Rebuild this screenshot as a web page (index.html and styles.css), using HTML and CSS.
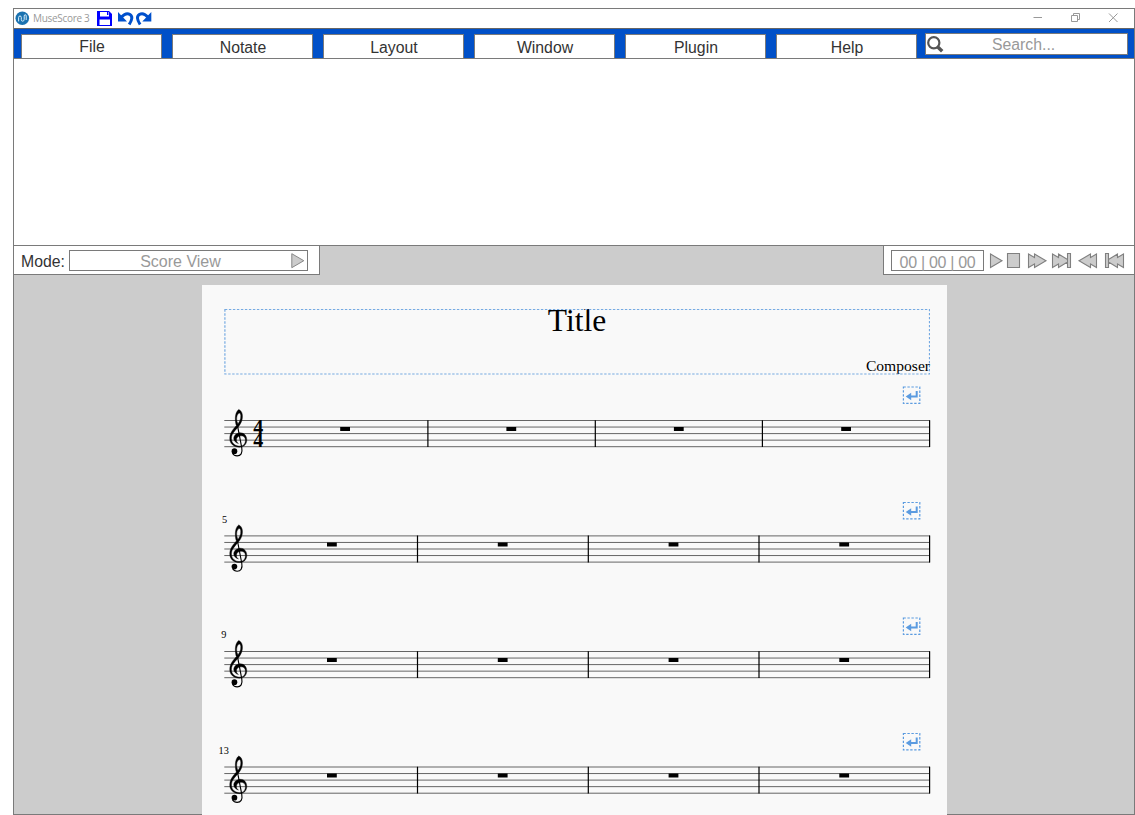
FILE: index.html
```html
<!DOCTYPE html>
<html lang="en">
<head>
<meta charset="utf-8">
<title>MuseScore 3</title>
<link rel="stylesheet" href="styles.css">
</head>
<body>
<svg class="defs" width="0" height="0" aria-hidden="true">
  <defs>
    <symbol id="clef" viewBox="0 -36 80 150" overflow="visible">
      <path class="clef-body" d="M41 -33C49 -30 53 -20 52 -10C51 8 39 20 30 30C22 39 19 46 19 54C19 68 30 77 44 77C56 77 61 68 61 59C61 50 55 46 48 46C39 46 34 52 34 58C34 64 36 67 40 69C32 67 26 61 26 54C26 44 35 37 46 37C58 37 65 47 65 58C65 72 56 80 43 80C26 80 14 70 14 54C14 38 23 27 34 15C43 6 48 -4 47 -15C46 -21 44 -23 42 -22C36 -20 34 -10 35 -1L37 12L33 14C28 -8 31 -26 41 -33Z"/>
      <path class="clef-stem" d="M35 4L50 82C53 98 47 106 36 106C30 106 25 103 22 98"/>
      <circle cx="28" cy="92" r="8.5"/>
    </symbol>
    <symbol id="staff" viewBox="0 0 706 27" overflow="visible">
      <path class="staff-line" d="M0 0H705.7M0 6.55H705.7M0 13.1H705.7M0 19.65H705.7M0 26.2H705.7"/>
      <use href="#clef" x=".8" y="-12" width="26.67" height="50"/>
    </symbol>
    <symbol id="break" viewBox="0 0 18 18" overflow="visible">
      <rect class="break-box" x=".9" y=".5" width="16.4" height="16.4"/>
      <path class="break-arrow" d="M14.2 4.5V10H7"/>
      <path class="break-head" d="M3.2 10L8.7 6.3V13.7Z"/>
    </symbol>
  </defs>
</svg>

<div class="window">
  <header class="titlebar">
    <svg class="title-icons" viewBox="14 9 20 19"><circle cx="22.3" cy="18.3" r="6.8" fill="#1b72b0"/><path d="M18.6 21.4V17.6Q18.6 16 20 16T21.3 17.6V19.5Q21.3 21.2 22.7 21.2T24.2 19.4V16.2Q24.2 14.7 25.2 14.7T26.2 16V20" fill="none" stroke="#d8eefb" stroke-width="1"/></svg>
    <span class="app-name">MuseScore 3</span>
    <svg class="quick-icons" viewBox="94 9 64 19">
      <path d="M97 11H109L112 14V26H97Z" fill="#00f"/><path d="M100 12H109V16.5H100ZM99.5 19.5H110V25H99.5Z" fill="#fff"/><path d="M107 12H108.4V15H107Z" fill="#00f"/>
      <g id="undo"><path d="M121.500 17Q126 12 130 14.500T129.200 24.500" fill="none" stroke="#0050cc" stroke-width="3"/><path d="M118 12V21.5H127Z" fill="#0050cc"/></g>
      <use href="#undo" transform="translate(269.3 0) scale(-1 1)"/>
    </svg>
    <svg class="window-controls" viewBox="1024 9 110 19"><path d="M1033.500 17.500H1042M1071.500 15.500H1077.500V21.500H1071.500ZM1073.500 15V13.500H1079.500V19.500H1078M1109 13.500L1117.500 22M1117.500 13.500L1109 22"/></svg>
  </header>

  <nav class="menubar">
    <a class="tab tab-file">File</a>
    <a class="tab">Notate</a>
    <a class="tab">Layout</a>
    <a class="tab">Window</a>
    <a class="tab">Plugin</a>
    <a class="tab">Help</a>
    <div class="search">
      <svg class="search-icon" viewBox="0 0 18 20"><circle cx="7.800" cy="8.800" r="5.600"/><path d="M11.800 13L16.200 17.200"/></svg>
      <span>Search...</span>
    </div>
  </nav>

  <section class="ribbon"></section>

  <main class="workspace">
    <div class="toolbars">
      <div class="mode">
        <span class="mode-label">Mode:</span>
        <div class="mode-field"><span>Score View</span>
          <svg class="mode-arrow" viewBox="0 0 14 16"><path d="M.8 .7L12.800 7.700L.8 14.700Z"/></svg>
        </div>
      </div>
      <div class="playback">
        <div class="time">00 | 00 | 00</div>
        <div class="transport">
          <svg width="17" height="28" viewBox="987 246 17 28"><path d="M990.500 254V267.500L1002 260.700Z"/></svg>
          <svg width="20" height="28" viewBox="1004 246 20 28"><path d="M1007.500 253.500H1019.500V267.500H1007.500Z"/></svg>
          <svg width="25" height="28" viewBox="1024 246 25 28"><path d="M1028.500 254L1034.500 257.500V254L1046 260.700L1034.500 267.500V264L1028.500 267.500Z"/></svg>
          <svg width="25" height="28" viewBox="1049 246 25 28"><path d="M1052.500 254L1058.500 257.500V254L1067.500 259.500V253.500H1070.500V267.500H1067.500V262L1058.500 267.500V264L1052.500 267.500ZM1067.500 259V262.500"/></svg>
          <svg width="27" height="28" viewBox="1074 246 27 28"><path d="M1096.500 254L1090.500 257.500V254L1079 260.700L1090.500 267.500V264L1096.500 267.500Z"/></svg>
          <svg width="27" height="28" viewBox="1101 246 27 28"><path d="M1123.500 254L1117.500 257.500V254L1108.500 259.500V253.500H1105.500V267.500H1108.500V262L1117.500 267.500V264L1123.500 267.500ZM1108.500 259V262.500"/></svg>
        </div>
      </div>
    </div>

    <article class="page">
      <div class="title-frame">
        <svg class="frame-line" viewBox="0 0 706 66"><rect x=".9" y=".5" width="704.600" height="64.500"/></svg>
        <h1 class="title">Title</h1>
        <p class="composer">Composer</p>
      </div>

      <svg class="system" width="745" height="115" viewBox="202 384 745 115">
        <use href="#break" x="902.5" y="386.5" width="18" height="18"/>
        <use href="#staff" x="224.3" y="420.5" width="706" height="27"/>
        <text class="meter"><tspan x="253.200" y="433.500">4</tspan><tspan x="253.200" y="446.600">4</tspan></text>
        <path class="barline" d="M427.9 420.2V447M595.3 420.2V447M762.4 420.2V447M929.6 420.2V447"/>
        <path class="rest" d="M340.2 428.9H350M506.4 428.9H516.2M673.9 428.9H683.7M841.2 428.9H851"/>
      </svg>
      <svg class="system" width="745" height="116" viewBox="202 499 745 116">
        <use href="#break" x="902.5" y="502" width="18" height="18"/>
        <text class="number" x="222" y="522.5">5</text>
        <use href="#staff" x="224.3" y="535.9" width="706" height="27"/>
        <path class="barline" d="M417.5 535.6V562.4M588.3 535.6V562.4M759 535.6V562.4M929.6 535.6V562.4"/>
        <path class="rest" d="M327 544.4H336.8M497.8 544.4H507.6M668.6 544.4H678.4M839.3 544.4H849.1"/>
      </svg>
      <svg class="system" width="745" height="115" viewBox="202 615 745 115">
        <use href="#break" x="902.5" y="617.5" width="18" height="18"/>
        <text class="number" x="221.3" y="638.4">9</text>
        <use href="#staff" x="224.3" y="651.5" width="706" height="27"/>
        <path class="barline" d="M417.5 651.2V678M588.3 651.2V678M759 651.2V678M929.6 651.2V678"/>
        <path class="rest" d="M327 660H336.8M497.8 660H507.6M668.6 660H678.4M839.3 660H849.1"/>
      </svg>
      <svg class="system" width="745" height="85" viewBox="202 730 745 85">
        <use href="#break" x="902.5" y="733" width="18" height="18"/>
        <text class="number" x="218.5" y="754">13</text>
        <use href="#staff" x="224.3" y="767" width="706" height="27"/>
        <path class="barline" d="M417.5 766.7V793.5M588.3 766.7V793.5M759 766.7V793.5M929.6 766.7V793.5"/>
        <path class="rest" d="M327 775.6H336.8M497.8 775.6H507.6M668.6 775.6H678.4M839.3 775.6H849.1"/>
      </svg>
    </article>
  </main>
</div>
</body>
</html>
```
FILE: styles.css
```css
* { box-sizing: border-box; }
html { overflow: hidden; background: #fff; }
body { margin: 0; padding: 8px 0 0 13px; font: 16px/20px "Liberation Sans", Arial, sans-serif; color: #333; }
svg { display: block; flex: none; }
.defs { position: absolute; }
.window { width: 1122px; height: 807px; border: 1px solid #7a7a7a; display: flex; flex-direction: column; }

.titlebar { height: 19px; flex: none; display: flex; align-items: center; }
.title-icons { width: 20px; height: 19px; }
.app-name { width: 60px; font: 10px/19px "Open Sans", "Noto Sans", sans-serif; letter-spacing: -.3px; color: #999; white-space: nowrap; text-indent: -1px; }
.quick-icons { width: 64px; height: 19px; }
.window-controls { width: 110px; height: 19px; margin-left: auto; }
.window-controls path { fill: none; stroke: #999; stroke-width: 1; }

.menubar { height: 31px; flex: none; display: flex; gap: 10px; padding: 5px 6px 0 7px; background: #0050c8; border-top: 1px solid #666; border-bottom: 1px solid #7a7a7a; }
.tab { width: 141px; height: 24px; border: 1px solid #7a7a7a; border-bottom: 0; background: #fff; text-align: center; line-height: 25px; font-size: 15.8px; padding-left: 1px; }
.tab-file { line-height: 23px; }
.search { width: 203px; height: 22px; margin: -1px 0 0 -2px; border: 1px solid #7a7a7a; background: #fff; color: #999; display: flex; line-height: 21px; font-size: 15.8px; }
.search span { margin-left: 48px; }
.search-icon { width: 18px; height: 20px; margin-left: 0; fill: none; stroke: #555; stroke-width: 2.2; }
.search-icon path { stroke-width: 3.5; }

.ribbon { height: 186px; flex: none; }

.workspace { flex: 1; min-height: 0; background: #ccc; border-top: 1px solid #7a7a7a; }
.toolbars { height: 29px; display: flex; justify-content: space-between; }
.mode { width: 306px; height: 29px; padding: 4px 0 0 7px; display: flex; background: #fff; border-right: 1px solid #7a7a7a; border-bottom: 1px solid #7a7a7a; }
.mode-label { width: 48px; line-height: 23px; font-size: 15.8px; }
.mode-field { width: 239px; height: 21px; border: 1px solid #7a7a7a; display: flex; align-items: center; color: #999; line-height: 21px; }
.mode-field span { width: 221px; height: 19px; text-align: center; }
.mode-arrow { width: 14px; height: 16px; fill: #ccc; stroke: #888; }
.playback { width: 251px; height: 29px; display: flex; background: #fff; border-left: 1px solid #7a7a7a; border-bottom: 1px solid #7a7a7a; }
.time { width: 93px; height: 21px; margin: 4px 3px 0 7px; border: 1px solid #7a7a7a; color: #999; text-align: center; line-height: 23px; white-space: nowrap; letter-spacing: -.3px; }
.transport { display: flex; fill: #ccc; stroke: #808080; stroke-width: 1.1; }

.page { position: relative; width: 745px; height: 530px; margin: 10px 0 0 188px; padding-top: 24px; background: #f9f9f9; overflow: hidden; }
.title-frame { position: relative; width: 706px; height: 75px; margin-left: 22px; font-family: "Liberation Serif", "Times New Roman", serif; color: #000; }
.frame-line { position: absolute; inset: 0; width: 706px; height: 66px; fill: none; stroke: #76aae2; stroke-width: 1.2; stroke-dasharray: 2.4 1.6; }
.title { margin: 0; font-size: 31.5px; line-height: 23px; font-weight: 400; text-align: center; }
.composer { margin: 24px 0 0; font-size: 15.6px; line-height: 20px; text-align: right; }
.clef-body { stroke: #000; stroke-width: 1.2; }
.clef-stem { fill: none; stroke: #000; stroke-width: 3.4; }
.staff-line { fill: none; stroke: #000; stroke-width: .6; }
.barline { fill: none; stroke: #000; stroke-width: 1.2; }
.rest { fill: none; stroke: #000; stroke-width: 4; }
.meter { font: bold 20px "Liberation Serif", serif; }
.number { font: 10.3px "Liberation Serif", serif; }
.break-box { fill: none; stroke: #5b9be0; stroke-width: 1.2; stroke-dasharray: 2.4 1.6; }
.break-arrow { fill: none; stroke: #5b9be0; stroke-width: 2; }
.break-head { fill: #5b9be0; }
```
